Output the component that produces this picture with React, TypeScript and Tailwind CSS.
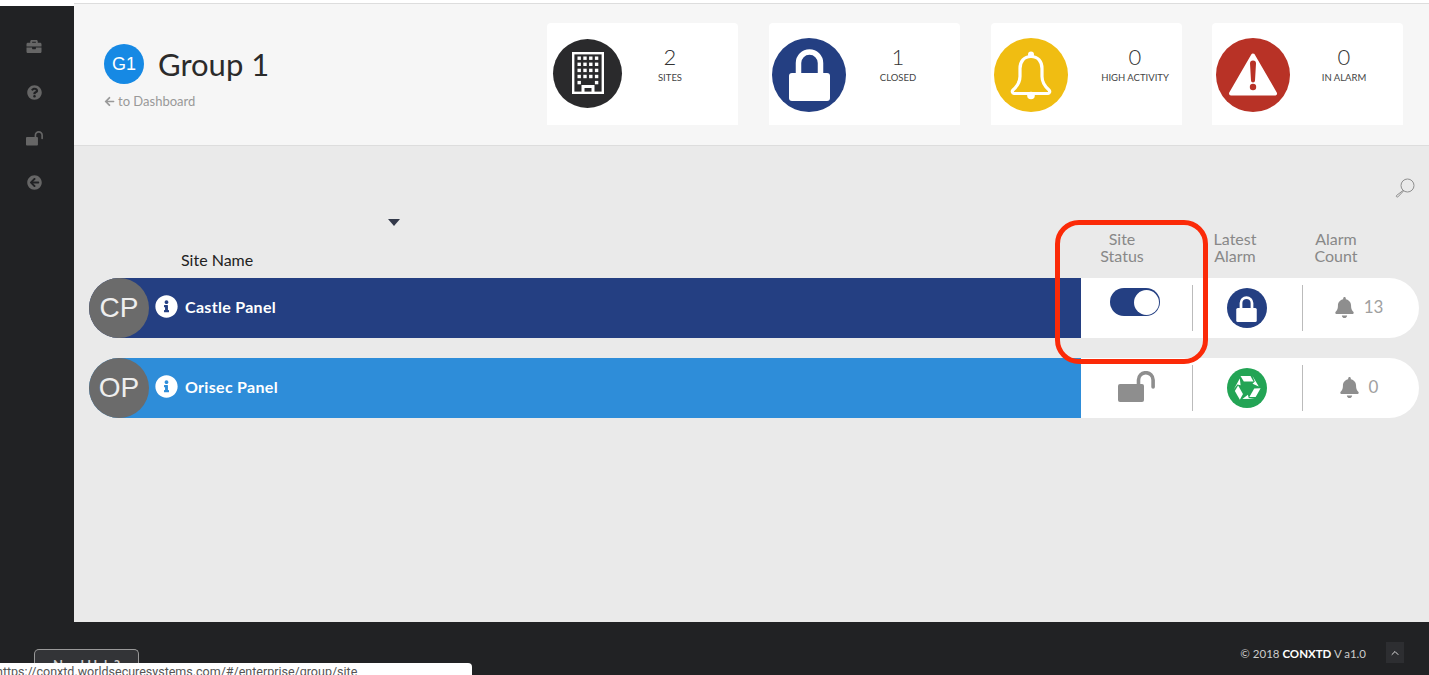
import { ChevronUp } from 'lucide-react';
import {
	FaArrowCircleLeft,
	FaArrowLeft,
	FaBell,
	FaBriefcase,
	FaInfoCircle,
	FaQuestionCircle
} from 'react-icons/fa';

const font = 'font-["Lato",sans-serif]';

function LockIcon({ className }: { className?: string }) {
	return (
		<svg viewBox="0 0 41 52" className={className} fill="none">
			<path d="M9.500 28V14a11 11 0 0 1 22 0V28" stroke="white" strokeWidth="5.500" />
			<rect x="0" y="24" width="41" height="28" rx="3" fill="white" />
		</svg>
	);
}

function OpenLock({ className }: { className?: string }) {
	return (
		<svg viewBox="0 0 37 32" className={className} fill="none">
			<path d="M20.5 15V9a7.3 7.3 0 0 1 14.6 0v7" stroke="currentColor" strokeWidth="3.6" strokeLinecap="round" />
			<rect x="0" y="13" width="26" height="18" rx="2" fill="currentColor" />
		</svg>
	);
}

function BuildingIcon() {
	const windows = [];
	for (let row = 0; row < 5; row++) {
		for (let col = 0; col < 4; col++) {
			if (row === 4 && (col === 1 || col === 2)) continue;
			windows.push(<rect key={`${row}-${col}`} x={5.5 + col * 5.8} y={4.5 + row * 6.1} width="3.4" height="3.4" fill="white" />);
		}
	}
	return (
		<svg viewBox="0 0 32 42" className="mt-[-2px] h-[42px] w-[32px]">
			<rect x="1.2" y="1.2" width="29.6" height="39.6" fill="none" stroke="white" strokeWidth="2.4" />
			{windows}
			<path d="M9.5 41v-8h13v8h-3v-5h-7v5z" fill="white" />
		</svg>
	);
}

function OutlineBell() {
	return (
		<svg viewBox="0 0 42 50" className="mb-[-2px] h-[50px] w-[42px]" fill="none">
			<circle cx="21" cy="3.4" r="3" fill="white" />
			<path
				d="M21 5.5c-7 0-11 5-11 12v8c0 6-3 10-7 13.5a2 2 0 0 0 1 3.5h34a2 2 0 0 0 1-3.5c-4-3.500-7-7.500-7-13.500v-8c0-7-4-12-11-12z"
				stroke="white"
				strokeWidth="3.2"
			/>
			<circle cx="21" cy="44.500" r="3.800" fill="white" />
		</svg>
	);
}

function WarningIcon() {
	return (
		<svg viewBox="0 0 48 43" className="mb-[1px] h-[43px] w-[48px]">
			<path d="M24 2.500L46 40.500H2z" fill="white" stroke="white" strokeWidth="4" strokeLinejoin="round" />
			<path d="M21 10.500a3 3 0 0 1 6 0l-1 17a2 2 0 0 1-4 0z" fill="#b83226" />
			<circle cx="24" cy="34" r="3.200" fill="#b83226" />
		</svg>
	);
}

function RecycleIcon() {
	const band = 'M-6.500-12H3.500L6.500-6.500H-3.200z';
	const head = 'M5.500-12L11.800-1.500L5.500-4.200L7.800-6.500z';
	return (
		<svg viewBox="-14 -14 28 28" className="h-[28px] w-[28px]" fill="white">
			{[0, 120, 240].map((angle) => (
				<g key={angle} transform={`rotate(${angle})`}>
					<path d={band} />
					<path d={head} />
				</g>
			))}
		</svg>
	);
}

function Stat({
	value,
	label,
	circle,
	padding,
	textWidth,
	children
}: {
	value: string;
	label: string;
	circle: string;
	padding: string;
	textWidth: string;
	children: React.ReactNode;
}) {
	return (
		<div className={`flex h-[102px] w-[191px] rounded-t-[4px] bg-white ${padding}`}>
			<div className={`flex shrink-0 items-center justify-center rounded-full ${circle}`}>{children}</div>
			<div className={`pt-[21px] text-center text-[#333] ${textWidth}`}>
				<div className="text-[22px] font-light leading-[26px]">{value}</div>
				<div className="mt-[2px] text-[9.5px] leading-[12px] text-[#444]">{label}</div>
			</div>
		</div>
	);
}

function SiteRow({
	initials,
	name,
	color,
	status,
	alarm,
	count
}: {
	initials: string;
	name: string;
	color: string;
	status: React.ReactNode;
	alarm: React.ReactNode;
	count: string;
}) {
	return (
		<div className="flex h-[60px]">
			<div className={`flex flex-1 items-center rounded-l-full ${color}`}>
				<div className='flex h-[60px] w-[60px] items-center justify-center rounded-full bg-[#6b6b6b] font-["Liberation_Sans",sans-serif] text-[28px] text-[#eee]'>
					{initials}
				</div>
				<FaInfoCircle className="mb-[4px] ml-[6px] text-[23px] text-white" />
				<span className="mb-[3px] ml-[7px] text-[16px] font-bold tracking-[0.3px] text-white">{name}</span>
			</div>
			<div className="flex w-[338px] items-center rounded-r-full bg-white">
				<div className="flex h-[46px] w-[112px] justify-center border-r border-[#bbb] pr-[3px]">{status}</div>
				<div className="flex h-[46px] w-[110px] justify-center border-r border-[#bbb] pr-[2px] pt-[3px]">{alarm}</div>
				<div className="flex w-[116px] items-center justify-center gap-[9px] pb-[2px] pr-[5px] text-[17px] text-[#a0a0a0]">
					<FaBell className="text-[21px] text-[#8e8e8e]" />
					<span>{count}</span>
				</div>
			</div>
		</div>
	);
}

export default function App() {
	return (
		<div className={`relative flex h-[675px] w-[1429px] flex-col overflow-hidden bg-white ${font}`}>
			<div className="flex flex-1">
				<aside className="mt-[6px] flex w-[74px] flex-col items-center gap-[31px] bg-[#212224] pr-[6px] pt-[33px] text-[#666]">
					<FaBriefcase className="h-[15px] w-[16px]" />
					<FaQuestionCircle className="h-[15px] w-[15px]" />
					<OpenLock className="h-[15px] w-[17px]" />
					<FaArrowCircleLeft className="-mt-[2px] h-[15px] w-[15px]" />
				</aside>
				<main className="flex flex-1 flex-col pt-[3px]">
					<header className="flex h-[143px] items-start border-y border-[#ddd] bg-[#f6f6f6] pt-[19px]">
						<div className="w-[473px] pl-[30px] pt-[21px]">
							<div className="flex items-center">
								<div className='flex h-10 w-10 items-center justify-center rounded-full bg-[#1689e4] font-["Liberation_Sans",sans-serif] text-[18px] text-white'>
									G1
								</div>
								<h1 className="ml-[14px] text-[31px] leading-10 text-[#2b2b2b]">Group 1</h1>
							</div>
							<div className="mt-[8px] flex items-center gap-[3px] text-[13px] text-[#999]">
								<FaArrowLeft className="text-[11px]" />
								<span>to Dashboard</span>
							</div>
						</div>
						<div className="flex gap-[31px]">
							<Stat value="2" label="SITES" circle="mt-[16px] h-[69px] w-[69px] bg-[#2a2a2c]" padding="pl-[6px]" textWidth="w-[96px]">
								<BuildingIcon />
							</Stat>
							<Stat value="1" label="CLOSED" circle="mt-[15px] h-[74px] w-[74px] bg-[#243f82]" padding="pl-[3px]" textWidth="w-[104px]">
								<LockIcon className="h-[52px] w-[41px]" />
							</Stat>
							<Stat value="0" label="HIGH ACTIVITY" circle="mt-[15px] h-[74px] w-[74px] bg-[#f0bd12]" padding="pl-[3px]" textWidth="ml-[20px] w-[94px]">
								<OutlineBell />
							</Stat>
							<Stat value="0" label="IN ALARM" circle="mt-[15px] h-[74px] w-[74px] bg-[#b83226]" padding="-ml-px pl-[4px]" textWidth="w-[108px]">
								<WarningIcon />
							</Stat>
						</div>
					</header>
					<section className="flex flex-1 flex-col bg-[#eaeaea] pl-[15px] pr-[10px]">
						<div className="flex h-[132px] flex-col">
							<div className="flex justify-end pt-[32px]">
								<svg viewBox="0 0 20 20" className="mr-[4px] h-[20px] w-[20px]" fill="none" stroke="#8f8f8f" strokeWidth="1">
									<circle cx="12.5" cy="7.5" r="6.5" />
									<path d="M8 12.500L1.500 17.500a1 1 0 0 0 1.400 1.400L8.500 13" />
								</svg>
							</div>
							<div className="relative flex-1">
								<div className="ml-[299px] mt-[21px] h-0 w-0 border-x-[6.5px] border-t-[7px] border-x-transparent border-t-[#33394a]" />
							</div>
							<div className="flex items-end pb-[10px] text-[16px] leading-[17px] text-[#888]">
								<div className="flex-1 pl-[92px] text-[#222]">Site Name</div>
								<div className="flex w-[338px] pb-[4px]">
									<div className="w-[82px] text-center">
										Site
										<br />
										Status
									</div>
									<div className="ml-[47px] w-[50px] text-center">
										Latest
										<br />
										Alarm
									</div>
									<div className="ml-[51px] w-[50px] text-center">
										Alarm
										<br />
										Count
									</div>
								</div>
							</div>
						</div>
						<div className="flex flex-col gap-[20px]">
							<SiteRow
								initials="CP"
								name="Castle Panel"
								color="bg-[#243f82]"
								count="13"
								status={
									<div className="mt-[3px] flex h-[28px] w-[50px] items-center justify-end rounded-full bg-[#243f82] pr-[1px]">
										<div className="h-[25px] w-[25px] rounded-full bg-white" />
									</div>
								}
								alarm={
									<div className="flex h-10 w-10 items-center justify-center rounded-full bg-[#243f82]">
										<LockIcon className="mt-[1px] h-[26px] w-[21px]" />
									</div>
								}
							/>
							<SiteRow
								initials="OP"
								name="Orisec Panel"
								color="bg-[#2e8dd9]"
								count="0"
								status={<OpenLock className="ml-[3px] mt-[6px] h-[32px] w-[37px] text-[#8e8e8e]" />}
								alarm={
									<div className="flex h-10 w-10 items-center justify-center rounded-full bg-[#23a455]">
										<RecycleIcon />
									</div>
								}
							/>
						</div>
					</section>
				</main>
			</div>
			<footer className="flex h-[53px] items-start justify-end bg-[#212224] pr-[25px] pt-[20px] text-[11.5px] text-[#ccc]">
				<span className="mr-[20px] mt-[1px] leading-[22px]">
					© 2018 <b className="text-white">CONXTD</b> V a1.0
				</span>
				<button className="flex h-[21px] w-[18px] items-center justify-center bg-[#2d2e31] text-[#ddd]">
					<ChevronUp className="h-3 w-3" />
				</button>
			</footer>
			<div className="absolute left-[34px] top-[649px] h-[30px] w-[105px] rounded-t-[5px] border-x border-t border-[#999] bg-[#333437] pt-[6px] text-center text-[13px] font-bold text-[#ccc]">
				Need Help?
			</div>
			<div className='absolute left-0 top-[663px] h-[12px] w-[472px] overflow-hidden rounded-tr-[4px] bg-white pt-[1px] font-["Roboto",sans-serif] text-[12.5px] leading-[15px] whitespace-nowrap text-[#555]'>
				<span className="-ml-[4px] block">https://conxtd.worldsecuresystems.com/#/enterprise/group/site</span>
			</div>
			<div className="pointer-events-none absolute left-[1055px] top-[220px] h-[144px] w-[153px] rounded-[24px] border-[5px] border-[#fb2a08]" />
		</div>
	);
}
